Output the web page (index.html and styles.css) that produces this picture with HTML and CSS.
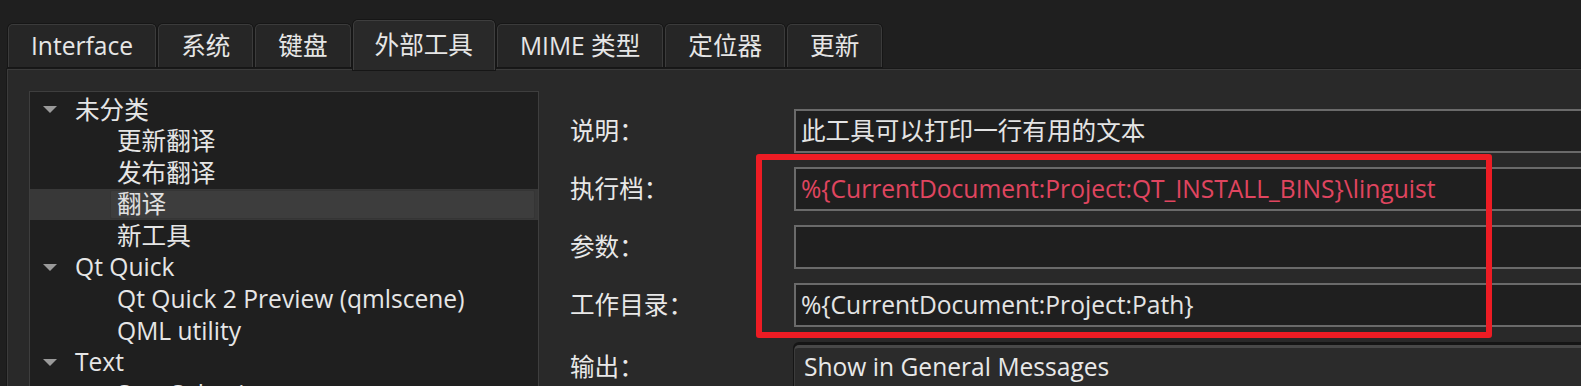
FILE: index.html
```html
<!DOCTYPE html>
<html lang="zh-CN">
<head>
    <meta charset="UTF-8">
    <title>外部工具 - 选项</title>
    <link rel="stylesheet" href="styles.css">
</head>
<body>
    <div class="window">
        <!-- Tab bar -->
        <div class="tabbar">
            <div class="tab">Interface</div>
            <div class="tab">系统</div>
            <div class="tab">键盘</div>
            <div class="tab active">外部工具</div>
            <div class="tab">MIME 类型</div>
            <div class="tab">定位器</div>
            <div class="tab">更新</div>
        </div>

        <div class="pane">
            <!-- Tool tree -->
            <div class="tree">
                <div class="tree-row group"><span class="arrow"></span>未分类</div>
                <div class="tree-row item">更新翻译</div>
                <div class="tree-row item">发布翻译</div>
                <div class="tree-row item selected"><span class="sel-box">翻译</span></div>
                <div class="tree-row item">新工具</div>
                <div class="tree-row group"><span class="arrow"></span>Qt Quick</div>
                <div class="tree-row item">Qt Quick 2 Preview (qmlscene)</div>
                <div class="tree-row item">QML utility</div>
                <div class="tree-row group"><span class="arrow"></span>Text</div>
                <div class="tree-row item">Sort Selection</div>
            </div>

            <!-- Tool details -->
            <div class="form">
                <label class="form-label">说明：</label>
                <div class="field">此工具可以打印一行有用的文本</div>

                <label class="form-label">执行档：</label>
                <div class="field path">%{CurrentDocument:Project:QT_INSTALL_BINS}\linguist</div>

                <label class="form-label">参数：</label>
                <div class="field"></div>

                <label class="form-label">工作目录：</label>
                <div class="field">%{CurrentDocument:Project:Path}</div>

                <label class="form-label output-label">输出：</label>
                <div class="combo">Show in General Messages</div>
            </div>

            <!-- Annotation drawn over the fields -->
            <div class="mark"></div>
        </div>
    </div>
</body>
</html>
```

FILE: styles.css
```css
* {
    box-sizing: border-box;
}

body {
    margin: 0;
    background: #1f1f1f;
    color: #e6e6e6;
    font-family: 'Open Sans', 'Noto Sans CJK SC', sans-serif;
    font-size: 24.6px;
    overflow: hidden;
    height: 386px;
}

.window {
    width: 1660px;
}

/* Tabs */
.tabbar {
    display: flex;
    align-items: flex-end;
    gap: 2px;
    height: 69px;
    padding-left: 8px;
    position: relative;
    z-index: 2;
}

.tab {
    height: 43px;
    margin-bottom: 2px;
    padding: 0 22px;
    display: flex;
    align-items: center;
    background: #262626;
    border: 1px solid #3b3b3b;
    border-bottom: none;
    border-radius: 5px 5px 0 0;
    box-shadow: 0 0 0 1px #161616;
    line-height: 1;
    white-space: nowrap;
}

.tab.active {
    height: 50px;
    margin-bottom: -1px;
    padding: 0 21px;
    background: #292929;
    border-color: #3e3e3e;
}

/* Page pane */
.pane {
    position: relative;
    display: flex;
    margin-left: 7px;
    padding: 21px 0 0 21px;
    height: 330px;
    background: #292929;
    border: 1px solid #3b3b3b;
    box-shadow: 0 0 0 1px #181818;
}

.tree {
    width: 510px;
    flex-shrink: 0;
    padding-top: 2px;
    background: #1f1f1f;
    border: 1px solid #3e3e3e;
}

.tree-row {
    height: 31.6px;
    display: flex;
    align-items: center;
    line-height: 1;
    white-space: nowrap;
}

.tree-row.group {
    padding-left: 13px;
}

.tree-row.item {
    padding-left: 87px;
}

.arrow {
    width: 0;
    height: 0;
    margin-right: 18px;
    border-left: 7px solid transparent;
    border-right: 7px solid transparent;
    border-top: 7px solid #9a9a9a;
}

.tree-row.selected {
    padding-left: 80px;
    padding-right: 3px;
    background: #383838;
}

.sel-box {
    flex: 1;
    height: 29px;
    display: flex;
    align-items: center;
    padding-left: 6px;
    background: #3d3d3d;
    border: 1px solid #353535;
    border-radius: 2px;
    color: #e0e0e0;
}

/* Form */
.form {
    flex: 1;
    display: grid;
    grid-template-columns: 224px 1fr;
    grid-auto-rows: 44px;
    row-gap: 14px;
    align-content: start;
    margin-left: 31px;
    padding-top: 18px;
}

.form-label {
    display: flex;
    align-items: center;
    line-height: 1;
    color: #e8e8e8;
}

.field {
    display: flex;
    align-items: center;
    padding-left: 5px;
    background: #1f1f1f;
    border: 2px solid #6a6a6a;
    line-height: 1;
    color: #e4e4e4;
    white-space: nowrap;
}

.field.path {
    color: #e0455f;
}

.output-label {
    margin-top: 4px;
    height: 44px;
}

.combo {
    margin-top: 4px;
    height: 52px;
    display: flex;
    align-items: center;
    padding: 0 0 10px 9px;
    background: #2b2b2b;
    border-top: 3px solid #484848;
    border-left: 1px solid #3c3c3c;
    border-radius: 5px 0 0 0;
    box-shadow: 0 -2px 0 1px #151515;
    line-height: 1;
    color: #e8e8e8;
}

/* Red highlight box over the executable / args / directory fields */
.mark {
    position: absolute;
    left: 748px;
    top: 84px;
    width: 736px;
    height: 184px;
    border: 6px solid #ed1c24;
    border-radius: 3px;
    pointer-events: none;
}
```
